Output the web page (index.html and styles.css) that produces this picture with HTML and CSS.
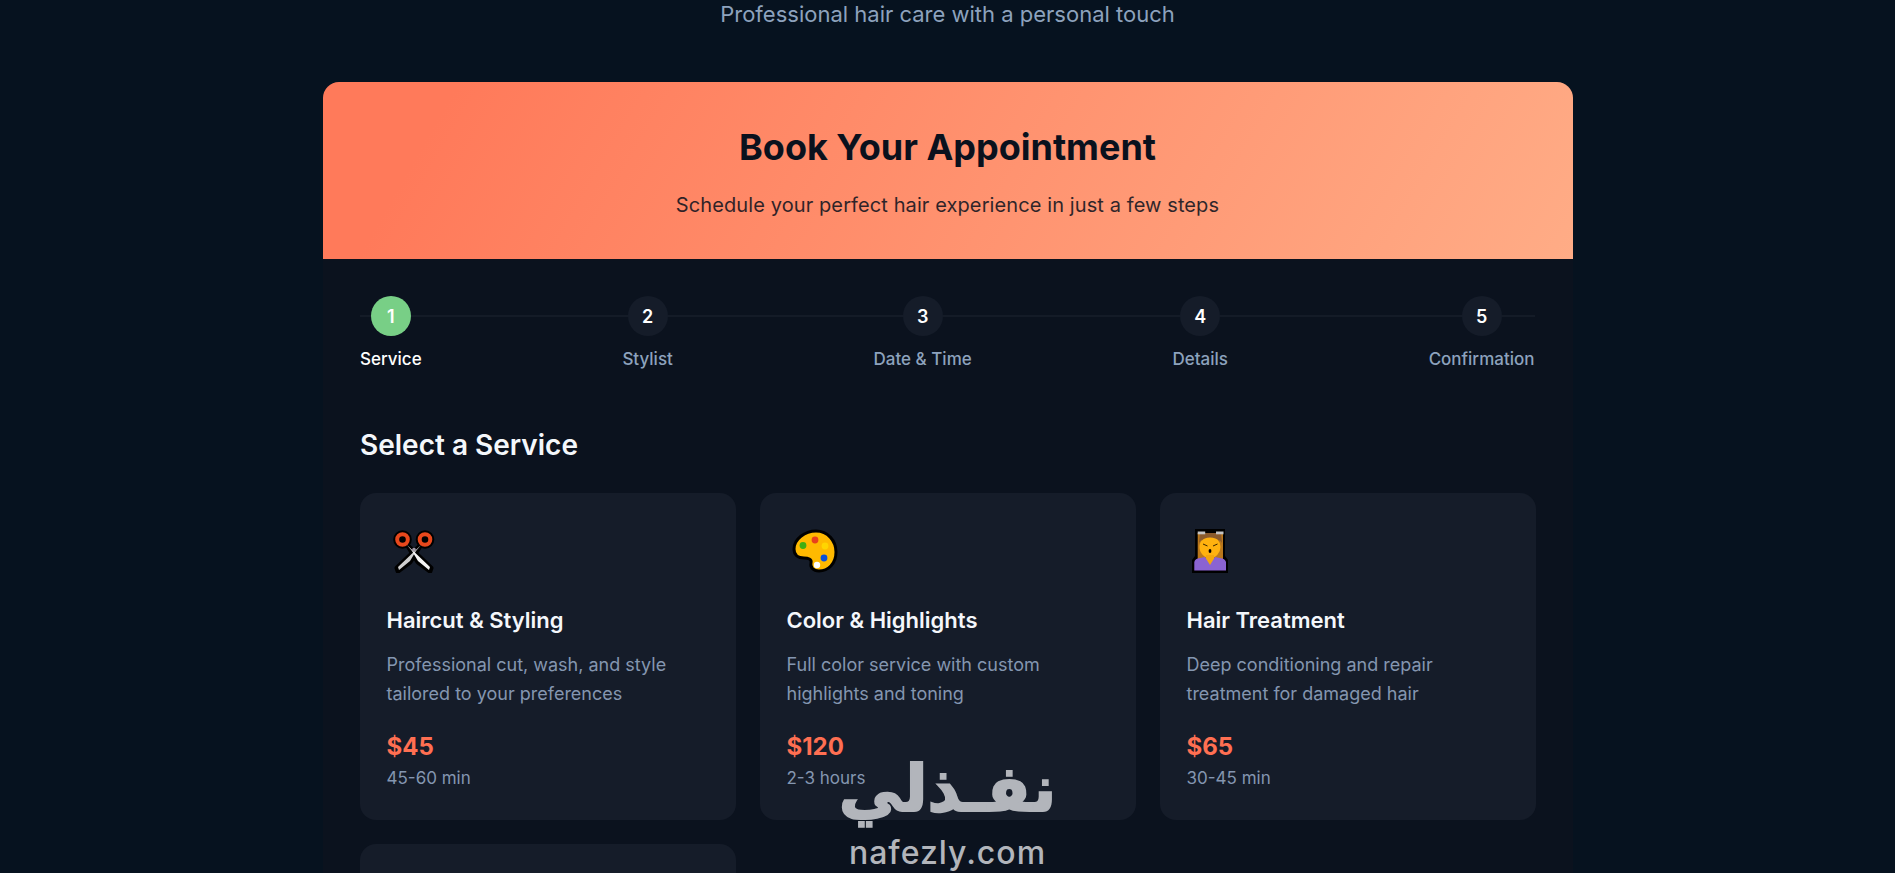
FILE: index.html
```html
<!DOCTYPE html>
<html lang="en">
<head>
<meta charset="utf-8">
<title>Book Your Appointment</title>
<link rel="stylesheet" href="styles.css">
</head>
<body>
<p class="tagline">Professional hair care with a personal touch</p>
<main class="booking">
  <header class="banner">
    <h1>Book Your Appointment</h1>
    <p>Schedule your perfect hair experience in just a few steps</p>
  </header>
  <div class="content">
    <ol class="steps">
      <li class="step active"><span class="dot">1</span><span class="label">Service</span></li>
      <li class="step"><span class="dot">2</span><span class="label">Stylist</span></li>
      <li class="step"><span class="dot">3</span><span class="label">Date &amp; Time</span></li>
      <li class="step"><span class="dot">4</span><span class="label">Details</span></li>
      <li class="step"><span class="dot">5</span><span class="label">Confirmation</span></li>
    </ol>
    <h2>Select a Service</h2>
    <div class="services">
      <article class="service">
        <svg class="icon" width="44" height="44" viewBox="0 0 44 44" aria-hidden="true">
          <g fill="#000" stroke="#000" stroke-width="5" stroke-linejoin="round">
            <circle cx="10.500" cy="10.500" r="6.800"/><circle cx="33" cy="10.500" r="6.800"/>
            <path d="M16 17 L39 39 L38 42 L26 33 Z"/><path d="M28 17 L5 39 L6 42 L18 33 Z"/>
          </g>
          <path d="M29 16 L6 38 L7 41 L18 32 L24 22 Z" fill="#cfcfcf"/>
          <path d="M15 16 L38 38 L37 41 L26 32 L20 22 Z" fill="#f4f4f4"/>
          <g fill="none" stroke="#e8481c" stroke-width="4">
            <circle cx="10.500" cy="10.500" r="5.300"/><circle cx="33" cy="10.500" r="5.300"/>
          </g>
          <circle cx="22" cy="20.500" r="1.800" fill="#a39aa8"/>
        </svg>
        <h3>Haircut &amp; Styling</h3>
        <p class="desc">Professional cut, wash, and style<br>tailored to your preferences</p>
        <p class="price">$45</p>
        <p class="time">45-60 min</p>
      </article>
      <article class="service">
        <svg class="icon" width="46" height="44" viewBox="0 0 46 44" aria-hidden="true">
          <path d="M24 2 C36 2 44 12 44 23 C44 35 36 42 27 42 C21 42 18 38 19 34 C20 30 16 29 12 29 C6 29 2 26 2 20 C2 10 13 2 24 2 Z" fill="#ffb900" stroke="#000" stroke-width="3"/>
          <circle cx="23" cy="11" r="3.400" fill="#e8401c"/>
          <circle cx="11" cy="16.500" r="3.400" fill="#3fae12"/>
          <circle cx="33" cy="17" r="3.400" fill="#ffd500"/>
          <circle cx="32" cy="29" r="3.400" fill="#0a50d8"/>
          <circle cx="25" cy="36" r="3.200" fill="#fff"/>
        </svg>
        <h3>Color &amp; Highlights</h3>
        <p class="desc">Full color service with custom<br>highlights and toning</p>
        <p class="price">$120</p>
        <p class="time">2-3 hours</p>
      </article>
      <article class="service">
        <svg class="icon" width="36" height="44" viewBox="0 0 36 44" aria-hidden="true">
          <path d="M3 0 H33 V27 L36 31 V44 H0 V31 L3 27 Z" fill="#000"/>
          <path d="M5.700 4 H31 V30 H5.700 Z" fill="#b9771c"/>
          <path d="M8 4 H29 L30 14 Q27 8 18 8 Q10 8 7 14 Z" fill="#8a5a2c"/>
          <ellipse cx="18" cy="18" rx="10.500" ry="11" fill="#ffb20f"/>
          <path d="M10 6 H27 L27.500 12 Q24 8.500 18 8.500 Q12 8.500 9.500 12 Z" fill="#8a5a2c"/>
          <path d="M14 26 H22 V36 H14 Z" fill="#f5a60c"/>
          <path d="M2.300 41.500 V33 Q3 29.500 8 29 L13 28 L18 36 L23 28 L28 29 Q33 29.500 34 33 V41.500 Z" fill="#8a63d2"/>
          <rect x="5.700" y="2.500" width="7.500" height="2.800" fill="#c4c4c4"/>
          <rect x="24" y="2.500" width="7.500" height="2.800" fill="#c4c4c4"/>
          <path d="M11 15 L15.500 17 M25.500 15 L21 17" stroke="#3a2400" stroke-width="1"/>
          <ellipse cx="18" cy="22" rx="1.400" ry="1.900" fill="#000"/>
        </svg>
        <h3>Hair Treatment</h3>
        <p class="desc">Deep conditioning and repair<br>treatment for damaged hair</p>
        <p class="price">$65</p>
        <p class="time">30-45 min</p>
      </article>
      <article class="service"></article>
    </div>
  </div>
</main>
<div class="watermark"><span class="wm-ar" lang="ar" dir="rtl">نفـذلي</span><span class="wm-en">nafezly.com</span></div>
</body>
</html>
```
FILE: styles.css
```css
* { box-sizing: border-box; }
html, body { height: 873px; overflow: hidden; }
body {
  margin: 0;
  position: relative;
  background: #06121f;
  font-family: Inter, "Liberation Sans", sans-serif;
  color: #fff;
}
p, h1, h2, h3, ol { margin: 0; padding: 0; }
.tagline {
  text-align: center;
  font-size: 22px;
  line-height: 29px;
  color: #8da2bd;
  margin-bottom: 53px;
}
.booking {
  width: 1250px;
  margin: 0 auto;
  background: #0b121e;
  border-radius: 16px 16px 0 0;
}
.banner {
  height: 177px;
  padding-top: 41px;
  text-align: center;
  background: linear-gradient(120deg, #ff7a5a 10%, #ffac86 100%);
  border-radius: 16px 16px 0 0;
  color: #0a111d;
}
.banner h1 { font-size: 36px; line-height: 48px; font-weight: 700; margin-bottom: 20px; }
.banner p { font-size: 20px; line-height: 28px; letter-spacing: .1px; opacity: .85; }
.content { padding: 37px 37px 0; }
.steps { list-style: none; display: flex; justify-content: space-between; position: relative; margin: 0 1px 57px .5px; }
.steps::before {
  content: "";
  position: absolute;
  left: 0; right: 0; top: 19px;
  height: 2px;
  background: #141b27;
}
.step { display: flex; flex-direction: column; align-items: center; position: relative; }
.dot {
  width: 40px; height: 40px; border-radius: 50%;
  background: #151c29;
  display: flex; align-items: center; justify-content: center;
  font-size: 18px; font-weight: 600;
}
.active .dot { background: #78cf86; }
.label { margin-top: 12px; font-size: 17px; line-height: 22px; color: #8da2bd; font-weight: 500; }
.active .label { color: #fff; }
h2 { font-size: 28px; line-height: 36px; font-weight: 600; margin-bottom: 30px; padding-left: .5px; color: #f4f7fb; }
.services { display: grid; grid-template-columns: repeat(3, 376px); gap: 24px; }
.service { background: #151c29; border-radius: 16px; padding: 36px 27px 29px; min-height: 327px; }
.icon { display: block; margin-left: 5px; margin-bottom: 33px; }
.service h3 { font-size: 22px; line-height: 28px; font-weight: 600; color: #f4f7fb; margin-bottom: 17px; }
.desc { font-size: 18px; line-height: 28.8px; color: #8496b0; margin-bottom: 23px; }
.price { font-size: 24px; line-height: 30px; font-weight: 700; color: #ff6f52; margin-bottom: 5px; }
.time { font-size: 17px; line-height: 22px; color: #8496b0; }
.watermark {
  position: absolute;
  left: 830px; top: 747px;
  width: 235px;
  display: flex; flex-direction: column; align-items: center;
  color: #b2b5bb;
  font-weight: 700;
}
.wm-ar { font-family: "DejaVu Sans", sans-serif; font-size: 64px; line-height: 84px; -webkit-text-stroke: 2px #b2b5bb; }
.wm-en { font-family: Inter, sans-serif; font-weight: 500; font-size: 32px; line-height: 40px; letter-spacing: 1px; margin-top: 2px; }
```
